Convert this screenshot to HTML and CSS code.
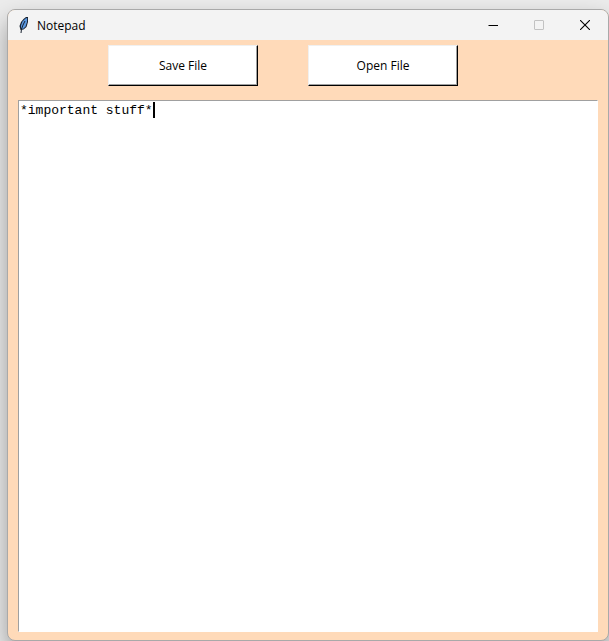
FILE: index.html
```html
<!DOCTYPE html>
<html lang="en">
<head>
    <meta charset="UTF-8">
    <meta name="viewport" content="width=device-width, initial-scale=1.0">
    <title>Notepad</title>
    <link rel="stylesheet" href="styles.css">
</head>
<body>
    <div class="window">
        <header class="titlebar">
            <svg class="feather" viewBox="0 0 16 16" aria-hidden="true">
                <path d="M10 0 L12 0 L12 5 L10.5 10 L7.5 12.5 L4.5 13 L3.5 9 L5 5 L7.5 2 Z" fill="#17212f"/>
                <path d="M9.5 1.5 L11.2 1 L11 5 L9.5 9.5 L7 12 L5 11 L5 8.5 L6.5 4.5 Z" fill="#5b98e0"/>
                <path d="M9 4 L7 8 L5.5 12 L5 16" fill="none" stroke="#17212f"/>
            </svg>
            <h1>Notepad</h1>
            <div class="controls">
                <button type="button" aria-label="Minimize">
                    <svg viewBox="0 0 10 10"><path d="M0.5 5.5H10" stroke="#000"/></svg>
                </button>
                <button type="button" aria-label="Maximize" disabled>
                    <svg viewBox="0 0 10 10"><rect x="0.5" y="0.5" width="9" height="9" rx="0.5" fill="none" stroke="#c2c2c2"/></svg>
                </button>
                <button type="button" aria-label="Close">
                    <svg viewBox="0 0 10 10"><path d="M0 0L10 10M10 0L0 10" stroke="#000" stroke-width="1.1"/></svg>
                </button>
            </div>
        </header>
        <main>
            <div class="toolbar">
                <button type="button" class="file-button">Save File</button>
                <button type="button" class="file-button">Open File</button>
            </div>
            <div class="editor">
                <textarea aria-label="Note text" spellcheck="false">*important stuff*</textarea>
                <span class="caret"></span>
            </div>
        </main>
    </div>
</body>
</html>
```

FILE: styles.css
```css
* {
    box-sizing: border-box;
}
body {
    margin: 0;
    padding: 9px 0 0 7px;
    height: 100vh;
    background-color: #ececec;
    font-family: "Segoe UI", "Open Sans", sans-serif;
    font-size: 12px;
    color: #000;
    overflow: hidden;
}
.window {
    display: flex;
    flex-direction: column;
    height: 100%;
    border: 1px solid #a9a9a9;
    border-radius: 8px;
    overflow: hidden;
    background-color: #ffdab9;
    box-shadow: 0 12px 24px rgba(0, 0, 0, 0.35);
}
.titlebar {
    display: flex;
    align-items: center;
    height: 30px;
    padding-left: 8px;
    background-color: #f3f3f3;
}
.feather {
    width: 16px;
    height: 16px;
}
h1 {
    margin: 0 0 0 5px;
    font-size: 12px;
    font-weight: normal;
}
.controls {
    display: flex;
    margin-left: auto;
}
.controls button {
    display: flex;
    justify-content: center;
    align-items: center;
    width: 46px;
    height: 30px;
    padding: 0;
    border: none;
    background: none;
}
.controls svg {
    width: 10px;
    height: 10px;
}
main {
    display: flex;
    flex-direction: column;
    flex: 1;
    padding: 5px 10px 8px;
}
.toolbar {
    display: flex;
    gap: 50px;
    padding-left: 90px;
}
.file-button {
    width: 150px;
    height: 41px;
    padding: 0;
    border: 1px solid;
    border-color: #f0f0f0 #000 #000 #f0f0f0;
    background-color: #fff;
    box-shadow: inset -1px -1px #a0a0a0;
    font: inherit;
    color: #000;
}
.editor {
    position: relative;
    display: flex;
    flex: 1;
    margin-top: 14px;
    font: 13px/16px "Liberation Mono", monospace;
}
textarea {
    flex: 1;
    padding: 2px 1px;
    border: 1px solid;
    border-color: #a0a0a0 #fff #fff #a0a0a0;
    outline: none;
    resize: none;
    background-color: #fff;
    font: inherit;
    color: #000;
}
.caret {
    position: absolute;
    top: 2px;
    left: calc(17ch + 2px);
    width: 2px;
    height: 16px;
    background-color: #000;
}
```
